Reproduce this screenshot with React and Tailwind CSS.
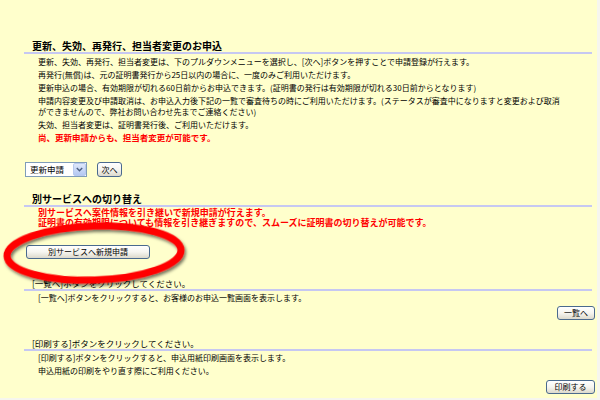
import React from "react";

function XPButton({ children, className = "" }) {
  return (
    <div
      className={
        "flex items-center justify-center h-[14px] rounded-[3px] border border-[#4a6a8e] bg-gradient-to-b from-white via-[#f6f5f0] to-[#dcd9cc] text-[8px] leading-none text-black " +
        className
      }
    >
      {children}
    </div>
  );
}

function SectionTitle({ children, bold = true, size = "text-[10px]" }) {
  return (
    <div
      className={
        "ml-[24px] mr-[5px] pl-[8px] leading-[12px] border-b-2 border-[#c6c8f2] text-black " +
        size +
        (bold ? " font-bold" : "")
      }
    >
      {children}
    </div>
  );
}

export default function App() {
  return (
    <div className="w-[600px] h-[400px] bg-[#f6f6ee] overflow-hidden font-['Noto_Sans_CJK_JP','Noto_Sans_CJK_SC',sans-serif]">
      <div className="relative w-[597px] h-[398px] bg-[#ffffcc] flex flex-col">
        {/* Section 1 */}
        <div className="mt-[40px]">
          <SectionTitle>更新、失効、再発行、担当者変更のお申込</SectionTitle>
          <div className="pl-[38px] pt-[2px] flex flex-col gap-[2px] text-[8px] leading-[11px] text-black">
            <p>更新、失効、再発行、担当者変更は、下のプルダウンメニューを選択し、[次へ]ボタンを押すことで申請登録が行えます。</p>
            <p>再発行(無償)は、元の証明書発行から25日以内の場合に、一度のみご利用いただけます。</p>
            <p>更新申込の場合、有効期限が切れる60日前からお申込できます。(証明書の発行は有効期限が切れる30日前からとなります)</p>
            <p>
              申請内容変更及び申請取消は、お申込入力後下記の一覧で審査待ちの時にご利用いただけます。(ステータスが審査中になりますと変更および取消
              <br />
              ができませんので、弊社お問い合わせ先までご連絡ください)
            </p>
            <p>失効、担当者変更は、証明書発行後、ご利用いただけます。</p>
            <p className="text-[8.5px] font-bold text-[#ff0000]">尚、更新申請からも、担当者変更が可能です。</p>
          </div>
        </div>

        {/* Select + next */}
        <div className="mt-[19px] ml-[25px] flex items-center gap-[10px]">
          <div className="flex items-center w-[62px] h-[15px] border border-[#7f9db9] bg-white">
            <span className="flex-1 pl-[4px] text-[8.5px] leading-none text-black">更新申請</span>
            <div className="w-[13px] h-[13px] flex items-center justify-center rounded-[2px] bg-gradient-to-b from-[#dfe8fb] to-[#b4c8f2] border border-[#b8c9ef]">
              <svg width="7" height="5" viewBox="0 0 7 5">
                <path d="M0.8 1 L3.5 3.8 L6.2 1" fill="none" stroke="#4d6185" strokeWidth="1.4" />
              </svg>
            </div>
          </div>
          <XPButton className="w-[25px] h-[15px]">次へ</XPButton>
        </div>

        {/* Section 2 */}
        <div className="mt-[16px]">
          <SectionTitle>別サービスへの切り替え</SectionTitle>
          <div className="pl-[38px] pt-[1px] text-[9px] leading-[10px] font-bold text-[#ff0000]">
            <p>別サービスへ案件情報を引き継いで新規申請が行えます。</p>
            <p>証明書の有効期限についても情報を引き継ぎますので、スムーズに証明書の切り替えが可能です。</p>
          </div>
        </div>
        <div className="mt-[17px] ml-[26px]">
          <XPButton className="w-[124px]">別サービスへ新規申請</XPButton>
        </div>

        {/* Section 3 */}
        <div className="mt-[18px]">
          <SectionTitle bold={false} size="text-[8.5px]">[一覧へ]ボタンをクリックしてください。</SectionTitle>
          <div className="pl-[38px] pt-[1px] text-[8px] leading-[11px] text-black">
            <p>[一覧へ]ボタンをクリックすると、お客様のお申込一覧画面を表示します。</p>
          </div>
          <div className="mt-[3px] mr-[2px] flex justify-end">
            <XPButton className="w-[38px]">一覧へ</XPButton>
          </div>
        </div>

        {/* Section 4 */}
        <div className="mt-[17px]">
          <SectionTitle bold={false} size="text-[8.5px]">[印刷する]ボタンをクリックしてください。</SectionTitle>
          <div className="pl-[38px] pt-[1px] flex flex-col gap-[2px] text-[8px] leading-[11px] text-black">
            <p>[印刷する]ボタンをクリックすると、申込用紙印刷画面を表示します。</p>
            <p>申込用紙の印刷をやり直す際にご利用ください。</p>
          </div>
          <div className="mt-[4px] mr-[2px] flex justify-end">
            <XPButton className="w-[49px]">印刷する</XPButton>
          </div>
        </div>

        {/* Red hand-drawn ellipse overlay */}
        <svg
          className="absolute left-0 top-[212px] pointer-events-none"
          width="200"
          height="88"
          viewBox="0 0 200 88"
        >
          <defs>
            <filter id="sh" x="-10%" y="-30%" width="130%" height="170%">
              <feDropShadow dx="1.5" dy="2.5" stdDeviation="1.6" floodColor="#000" floodOpacity="0.55" />
            </filter>
          </defs>
          <ellipse
            cx="94"
            cy="41"
            rx="87"
            ry="27"
            transform="rotate(-2 94 41)"
            fill="none"
            stroke="#ff0000"
            strokeWidth="7"
            filter="url(#sh)"
          />
        </svg>
      </div>
    </div>
  );
}
